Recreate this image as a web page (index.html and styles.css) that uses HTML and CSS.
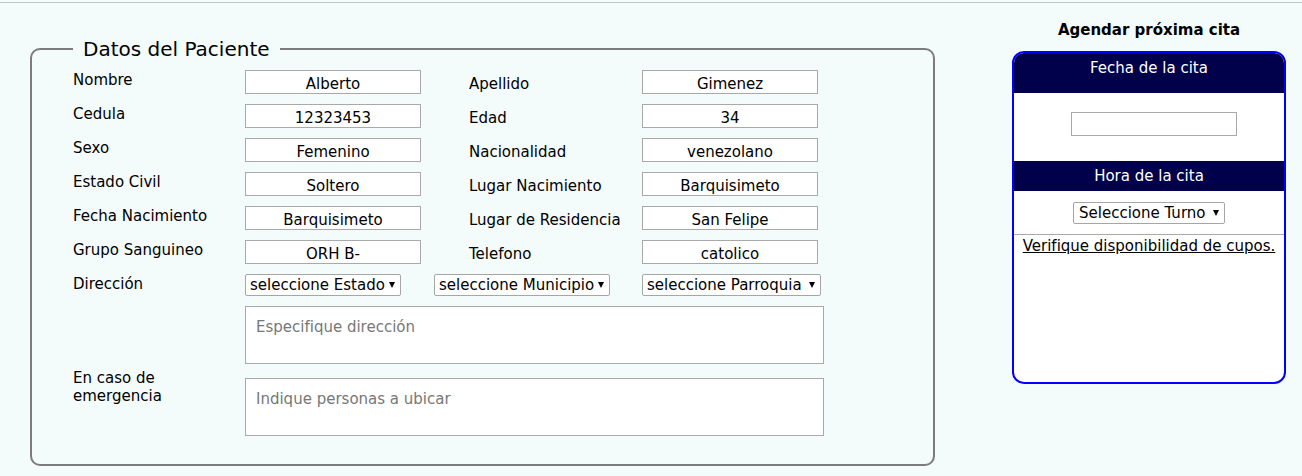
FILE: index.html
```html
<!DOCTYPE html>
<html lang="es">
<head>
<meta charset="utf-8">
<title>Datos del Paciente</title>
<link rel="stylesheet" href="styles.css">
</head>
<body>
<div class="topbar"></div>
<div class="page">
  <fieldset class="patient">
    <legend>Datos del Paciente</legend>
    <div class="grid">
      <label class="lbl">Nombre</label><input class="fld" value="Alberto">
      <label class="lbl lbl-r">Apellido</label><input class="fld" value="Gimenez">
      <label class="lbl">Cedula</label><input class="fld" value="12323453">
      <label class="lbl lbl-r">Edad</label><input class="fld" value="34">
      <label class="lbl">Sexo</label><input class="fld" value="Femenino">
      <label class="lbl lbl-r">Nacionalidad</label><input class="fld" value="venezolano">
      <label class="lbl">Estado Civil</label><input class="fld" value="Soltero">
      <label class="lbl lbl-r">Lugar Nacimiento</label><input class="fld" value="Barquisimeto">
      <label class="lbl">Fecha Nacimiento</label><input class="fld" value="Barquisimeto">
      <label class="lbl lbl-r">Lugar de Residencia</label><input class="fld" value="San Felipe">
      <label class="lbl">Grupo Sanguineo</label><input class="fld" value="ORH B-">
      <label class="lbl lbl-r">Telefono</label><input class="fld" value="catolico">
      <label class="lbl">Dirección</label>
      <div class="selects">
        <span class="sel sel-estado"><select><option>seleccione Estado</option></select></span>
        <span class="sel sel-muni"><select><option>seleccione Municipio</option></select></span>
        <span class="sel sel-parr"><select><option>seleccione Parroquia</option></select></span>
      </div>
      <span class="lbl"></span>
      <textarea class="area" placeholder="Especifique dirección"></textarea>
      <label class="lbl lbl-emerg">En caso de<br>emergencia</label>
      <textarea class="area area-emerg" placeholder="Indique personas a ubicar"></textarea>
    </div>
  </fieldset>

  <aside class="agenda">
    <h3 class="agenda-title">Agendar próxima cita</h3>
    <div class="box">
      <div class="band band-fecha">Fecha de la cita</div>
      <div class="date-area"><input class="date-input"></div>
      <div class="band band-hora">Hora de la cita</div>
      <div class="turno-area">
        <span class="sel sel-turno"><select><option>Seleccione Turno</option></select></span>
      </div>
      <div class="link-area"><a href="#" class="link">Verifique disponibilidad de cupos.</a></div>
    </div>
  </aside>
</div>
</body>
</html>
```

FILE: styles.css
```css
* { box-sizing: border-box; }

body {
  margin: 0;
  background: #f4fbfb;
  font-family: "DejaVu Sans", Verdana, sans-serif;
  font-size: 15px;
  line-height: 18px;
  color: #000;
  width: 1302px;
  height: 476px;
  overflow: hidden;
}

.topbar {
  height: 4px;
  border-bottom: 1px solid #c4c4c4;
  margin-top: -1px;
}

.page {
  display: flex;
  align-items: flex-start;
  padding-top: 18px;
}

.patient {
  margin: 16px 0 0 30px;
  width: 905px;
  padding: 9px 0 28px 41px;
  border: 2px solid #7c7c7c;
  border-radius: 10px;
  min-width: 0;
}

.patient legend {
  font-size: 20px;
  line-height: 24px;
  padding: 0 10px;
  color: #000;
}

.grid {
  display: grid;
  grid-template-columns: 172px 224px 173px 1fr;
  row-gap: 10px;
  align-items: start;
}

.lbl {
  margin-top: 1px;
  line-height: 18px;
}

.lbl-r {
  margin-top: 5px;
}

.lbl-emerg {
  margin-top: -5px;
}

.fld {
  width: 176px;
  height: 24px;
  border: 1px solid #a9a9a9;
  background: #fff;
  font: 15px "DejaVu Sans", Verdana, sans-serif;
  line-height: 18px;
  text-align: center;
  padding: 3px 0 0;
  color: #000;
}

.selects {
  grid-column: 2 / 5;
  display: flex;
  align-items: flex-start;
}

.sel {
  position: relative;
  display: inline-block;
}

.sel select {
  appearance: none;
  -webkit-appearance: none;
  height: 22px;
  border: 1px solid #a6a6a6;
  border-radius: 2px;
  background: #fff;
  font: 15px "DejaVu Sans", Verdana, sans-serif;
  line-height: 18px;
  color: #000;
  padding: 0 0 0 4px;
  display: block;
}

.sel::after {
  content: "";
  position: absolute;
  right: 6px;
  top: 8px;
  border-left: 3px solid transparent;
  border-right: 3px solid transparent;
  border-top: 6px solid #000;
  pointer-events: none;
}

.sel-estado select { width: 156px; }
.sel-muni { margin-left: 33px; }
.sel-muni select { width: 176px; }
.sel-parr { margin-left: 32px; }
.sel-parr select { width: 179px; }

.area {
  grid-column: 2 / 5;
  width: 579px;
  height: 58px;
  border: 1px solid #a9a9a9;
  background: #fff;
  font: 15px "DejaVu Sans", Verdana, sans-serif;
  line-height: 18px;
  padding: 11px 10px;
  resize: none;
  display: block;
}

.area::placeholder {
  color: #777;
}

.area-emerg {
  margin-top: 4px;
}

.agenda {
  margin-left: 77px;
  width: 274px;
}

.agenda-title {
  margin: 0 0 12px;
  font-size: 15px;
  line-height: 18px;
  font-weight: bold;
  text-align: center;
}

.box {
  height: 333px;
  border: 2px solid #0000ff;
  border-radius: 12px;
  background: #fff;
  overflow: hidden;
}

.band {
  background: #01014b;
  color: #fff;
  text-align: center;
  line-height: 18px;
}

.band-fecha {
  padding: 6px 0 16px;
}

.band-hora {
  padding: 6px 0 6px;
}

.date-area {
  padding: 19px 0 25px;
  text-align: center;
}

.date-input {
  width: 166px;
  height: 24px;
  border: 1px solid #a9a9a9;
  background: #fff;
  margin-left: 10px;
  display: inline-block;
  vertical-align: top;
}

.turno-area {
  padding: 11px 0 10px;
  text-align: center;
  border-bottom: 1px solid #a9a9a9;
}

.sel-turno {
  vertical-align: top;
}

.sel-turno select {
  width: 152px;
  padding-left: 5px;
}

.link-area {
  text-align: center;
  line-height: 18px;
  padding-top: 2px;
}

.link {
  color: #000;
  text-decoration: underline;
}
```
